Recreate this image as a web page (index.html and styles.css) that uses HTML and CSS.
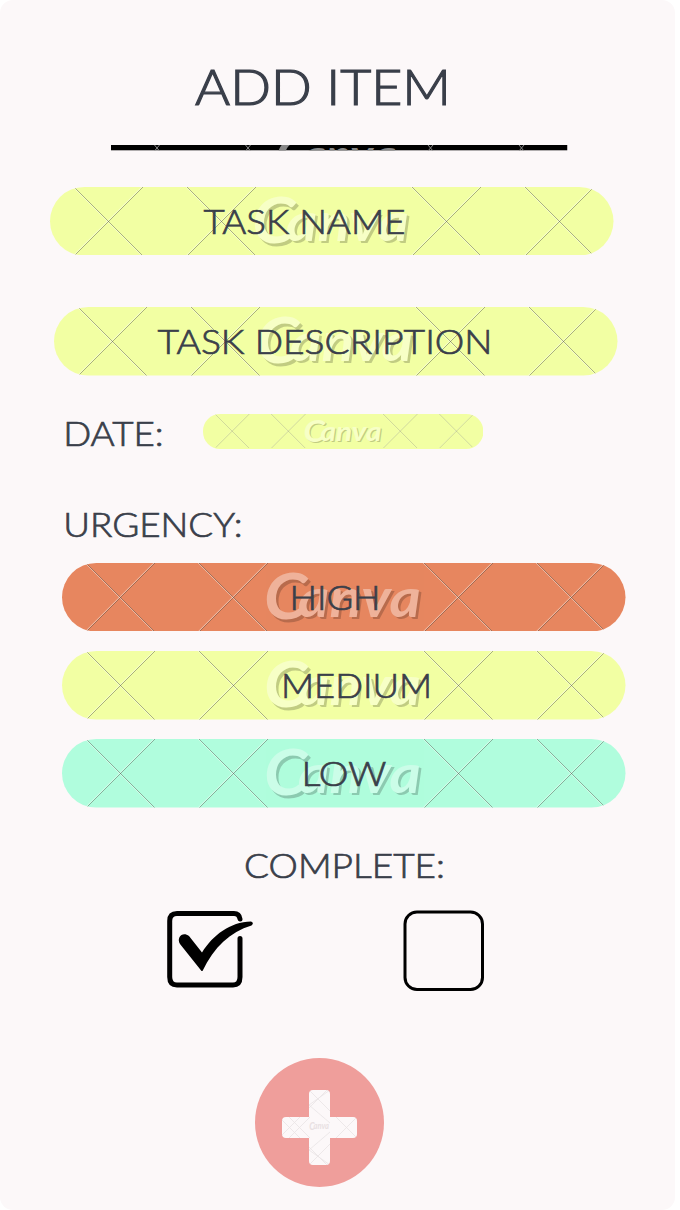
FILE: index.html
```html
<!DOCTYPE html>
<html lang="en">
<head>
<meta charset="utf-8">
<title>Add item</title>
<link rel="stylesheet" href="styles.css">
</head>
<body>
<svg class="defs" aria-hidden="true">
  <defs>
    <g id="crosses">
      <path d="M24 0l69 69M93 0L24 69M137 0l69 69M206 0l-69 69M362 0l69 69M431 0l-69 69M475 0l69 69M544 0l-69 69"/>
    </g>
    <g id="wordmark">
      <text class="mark-c" x="202" y="56" textLength="43" lengthAdjust="spacingAndGlyphs">C</text>
      <text class="mark-rest" x="236" y="53.500" textLength="123" lengthAdjust="spacingAndGlyphs">anva</text>
    </g>
    <clipPath id="pill-clip"><rect width="563.500" height="68.500" rx="34.250"/></clipPath>
    <g id="watermark" clip-path="url(#pill-clip)">
      <use href="#crosses" class="cross-light" x="-1" y="-.2"/>
      <use href="#crosses" class="cross-dark"/>
      <use href="#wordmark" class="mark-shadow" x="2.500" y="2.500"/>
      <use href="#wordmark" class="mark-light"/>
    </g>
    <clipPath id="line-clip"><rect width="456.500" height="5.600"/></clipPath>
    <clipPath id="plus-clip"><path d="M31 0h13a4 4 0 0 1 4 4v23h23a4 4 0 0 1 4 4v13a4 4 0 0 1-4 4H48v23a4 4 0 0 1-4 4H31a4 4 0 0 1-4-4V48H4a4 4 0 0 1-4-4V31a4 4 0 0 1 4-4h23V4a4 4 0 0 1 4-4z"/></clipPath>
  </defs>
</svg>
<main class="screen">
  <h1 class="title"><svg width="264" height="62"><text x="3" y="52.800" textLength="256" lengthAdjust="spacingAndGlyphs">ADD ITEM</text></svg></h1>
  <svg class="divider" width="457" height="6">
    <g clip-path="url(#line-clip)">
      <rect width="456.500" height="5.600"/>
      <path class="divider-cross" d="M43.500 0l5 6M48.500 0l-5 6M134.500 0l5 6M139.500 0l-5 6M317 0l5 6M322 0l-5 6M408 0l5 6M413 0l-5 6"/>
      <use class="divider-mark" href="#wordmark" transform="translate(9 -16.500) scale(.77)"/>
    </g>
  </svg>
  <svg class="pill lime task-name" viewBox="0 0 563.500 68.500">
    <rect width="563.500" height="68.500" rx="34.250"/><use href="#watermark"/>
    <text class="label" x="153.500" y="47.300" textLength="202" lengthAdjust="spacingAndGlyphs">TASK NAME</text>
  </svg>
  <svg class="pill lime task-description" viewBox="0 0 563.500 68.500">
    <rect width="563.500" height="68.500" rx="34.250"/><use href="#watermark"/>
    <text class="label" x="103.500" y="47.300" textLength="335" lengthAdjust="spacingAndGlyphs">TASK DESCRIPTION</text>
  </svg>
  <div class="date-row">
    <svg class="date-label" width="110" height="40"><text class="label" x=".2" y="33.200" textLength="100.500" lengthAdjust="spacingAndGlyphs">DATE:</text></svg>
    <svg class="date-field lime" viewBox="0 0 563.500 70.300" preserveAspectRatio="none">
      <rect width="563.500" height="70.300" rx="34.250"/><use href="#watermark"/>
    </svg>
  </div>
  <svg class="urgency-label" width="190" height="40"><text class="label" x=".2" y="33.200" textLength="179.500" lengthAdjust="spacingAndGlyphs">URGENCY:</text></svg>
  <div class="urgency">
    <svg class="pill orange" viewBox="0 0 563.500 68.500">
      <rect width="563.500" height="68.500" rx="34.250"/><use href="#watermark"/>
      <text class="label" x="227.500" y="47.300" textLength="91" lengthAdjust="spacingAndGlyphs">HIGH</text>
    </svg>
    <svg class="pill lime" viewBox="0 0 563.500 68.500">
      <rect width="563.500" height="68.500" rx="34.250"/><use href="#watermark"/>
      <text class="label" x="219" y="47.300" textLength="151" lengthAdjust="spacingAndGlyphs">MEDIUM</text>
    </svg>
    <svg class="pill mint" viewBox="0 0 563.500 68.500">
      <rect width="563.500" height="68.500" rx="34.250"/><use href="#watermark"/>
      <text class="label" x="239.500" y="47.300" textLength="85" lengthAdjust="spacingAndGlyphs">LOW</text>
    </svg>
  </div>
  <svg class="complete-label" width="210" height="40"><text class="label" x="1" y="33.200" textLength="201" lengthAdjust="spacingAndGlyphs">COMPLETE:</text></svg>
  <div class="checks">
    <svg width="88" height="82" viewBox="0 0 88 82">
      <path class="box-thick" d="M73 9C72.500 5.500 71 3.500 67 3.500H10Q2.700 3.500 2.700 11V67Q2.700 75 10 75H66Q73 75 73 67V28.500"/>
      <path d="M13 34C9 27 16 21 22 26L35 42.500C46 25 63 12 84 11.500Q87.500 13 84.500 15.500C63 22 47 37 35.500 61H34.500Z"/>
    </svg>
    <svg width="82" height="82" viewBox="0 0 82 82"><rect class="box-thin" x="2" y="2" width="77.500" height="77.500" rx="12"/></svg>
  </div>
  <button class="add" aria-label="Add">
    <svg width="75" height="75" viewBox="0 0 75 75">
      <g clip-path="url(#plus-clip)">
        <rect class="plus-fill" width="75" height="75"/>
        <path class="plus-lines" d="M0 30l45 45M0 45L45 0M7 27l21 21M7 48l21-21M27 0l48 48M27 75l48-48M27 15l21-15M27 15l21 18M27 60l21 15M27 60l21-18"/>
        <g transform="translate(2 30) scale(.125 .17)"><use href="#wordmark" class="plus-mark"/></g>
      </g>
    </svg>
  </button>
</main>
</body>
</html>
```
FILE: styles.css
```css
body { margin: 0; background: #fff; font-family: Lato, "Open Sans", sans-serif; }
svg { display: block; flex: none; }
.defs { position: absolute; width: 0; height: 0; }
.screen {
  box-sizing: border-box; width: 675px; height: 1210px; padding-top: 52px;
  display: flex; flex-direction: column; align-items: flex-start;
  background: #fcf8f9; border-radius: 13px; overflow: hidden;
}
.title { margin: 0 0 31px 192px; font-size: 48.5px; font-weight: 300; }
.title text, .label { fill: #3a3f4a; stroke: #3a3f4a; stroke-width: .7; }
.title text { stroke-width: 1.2; }
.label { font-size: 32.6px; font-weight: 300; }
.divider { margin-left: 111px; }
.divider-cross { stroke: #888; stroke-width: 1; fill: none; }
.divider-mark { fill: #888; }
.pill { width: 563.5px; height: 68.5px; }
.lime { fill: #f2ffa3; color: #f7ffc6; }
.orange { fill: #e7865f; color: #efb29a; }
.mint { fill: #b0fddd; color: #cbfde8; }
.task-name { margin: 35.7px 0 0 50px; }
.task-description { margin: 52px 0 0 54px; }
.date-row { display: flex; align-items: flex-start; margin: 37.2px 0 0 62.5px; }
.date-label { width: 110px; }
.date-field { width: 280.3px; height: 35px; margin: .7px 0 0 30.5px; }
.urgency-label { margin: 51px 0 0 62.5px; }
.urgency { display: flex; flex-direction: column; gap: 19.8px; margin: 18.9px 0 0 62px; }
.complete-label { margin: 37.4px 0 0 243px; }
.checks { display: flex; gap: 147.5px; margin: 24.9px 0 0 167px; }
.cross-light { fill: none; stroke: rgba(255,255,255,.5); stroke-width: 1; }
.cross-dark { fill: none; stroke: rgba(70,70,60,.42); stroke-width: 1; }
.mark-c { font: italic 700 63px Lato, sans-serif; }
.mark-rest { font: italic 700 54px Lato, sans-serif; }
.mark-shadow { fill: #000; opacity: .2; }
.mark-light { fill: currentColor; }
.box-thick { fill: none; stroke: #000; stroke-width: 5; stroke-linecap: round; }
.box-thin { fill: none; stroke: #000; stroke-width: 3; }
.add {
  display: flex; flex: none; box-sizing: border-box; width: 129.4px; height: 129.4px;
  margin: 65.7px 0 0 254.8px; padding: 32px 0 0 27.5px;
  border: 0; border-radius: 50%; background: #ef9e9b;
}
.plus-fill { fill: #fcf8f9; }
.plus-lines { fill: none; stroke: #e9e3e4; stroke-width: .8; }
.plus-mark { fill: #e8e0e2; }
```
